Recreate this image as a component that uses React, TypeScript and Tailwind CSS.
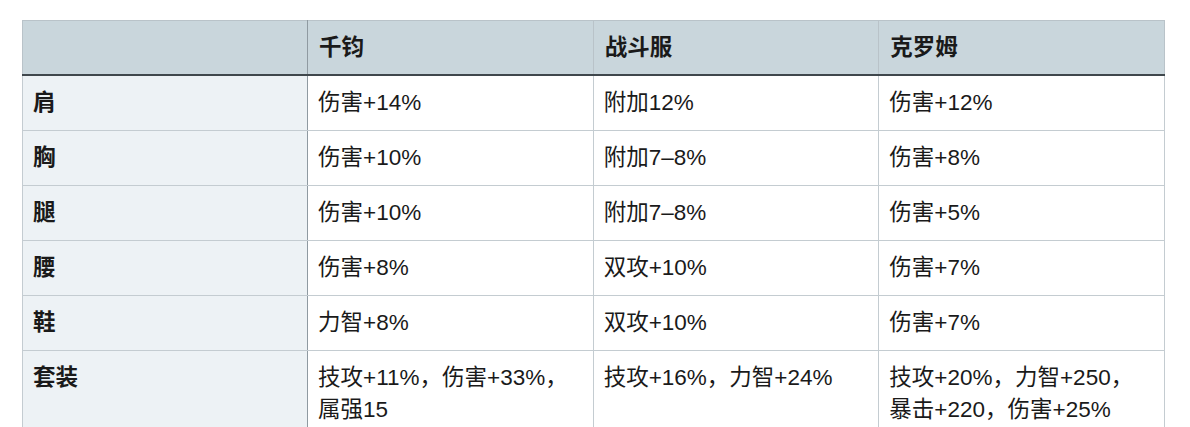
import React from 'react';

const columns = ['千钧', '战斗服', '克罗姆'];

const rows: { slot: string; values: string[][] }[] = [
  { slot: '肩', values: [['伤害+14%'], ['附加12%'], ['伤害+12%']] },
  { slot: '胸', values: [['伤害+10%'], ['附加7–8%'], ['伤害+8%']] },
  { slot: '腿', values: [['伤害+10%'], ['附加7–8%'], ['伤害+5%']] },
  { slot: '腰', values: [['伤害+8%'], ['双攻+10%'], ['伤害+7%']] },
  { slot: '鞋', values: [['力智+8%'], ['双攻+10%'], ['伤害+7%']] },
  {
    slot: '套装',
    values: [
      ['技攻+11%，伤害+33%，', '属强15'],
      ['技攻+16%，力智+24%'],
      ['技攻+20%，力智+250，', '暴击+220，伤害+25%'],
    ],
  },
];

const font = { fontFamily: '"Liberation Sans", "Noto Sans CJK SC", sans-serif' };

export default function App() {
  return (
    <div className="min-h-screen bg-white pl-[22px] pt-[20px]" style={font}>
      <table className="w-[1143px] table-fixed border-collapse text-[22.5px] leading-[32px] text-[#1a1a1a]">
        <thead>
          <tr className="bg-[#c9d6dc]">
            <th className="w-[285px] border border-[#b9c3c9] border-b-2 border-b-[#3f474c] border-r-[#8f9aa1] pl-[11px] pr-3 pt-[11px] pb-[10px] text-left font-bold"></th>
            {columns.map((c) => (
              <th
                key={c}
                className="border border-[#b9c3c9] border-b-2 border-b-[#3f474c] pl-[11px] pr-3 pt-[11px] pb-[10px] text-left font-bold"
              >
                {c}
              </th>
            ))}
          </tr>
        </thead>
        <tbody>
          {rows.map((r) => (
            <tr key={r.slot}>
              <td className="border border-[#c4ccd1] border-r-[#8f9aa1] bg-[#edf2f5] pl-[10px] pr-3 py-[11px] align-top font-bold">
                {r.slot}
              </td>
              {r.values.map((lines, i) => (
                <td key={i} className="border border-[#c4ccd1] bg-white pl-[10px] pr-3 py-[11px] align-top">
                  {lines.map((l) => (
                    <div key={l}>{l}</div>
                  ))}
                </td>
              ))}
            </tr>
          ))}
        </tbody>
      </table>
    </div>
  );
}
